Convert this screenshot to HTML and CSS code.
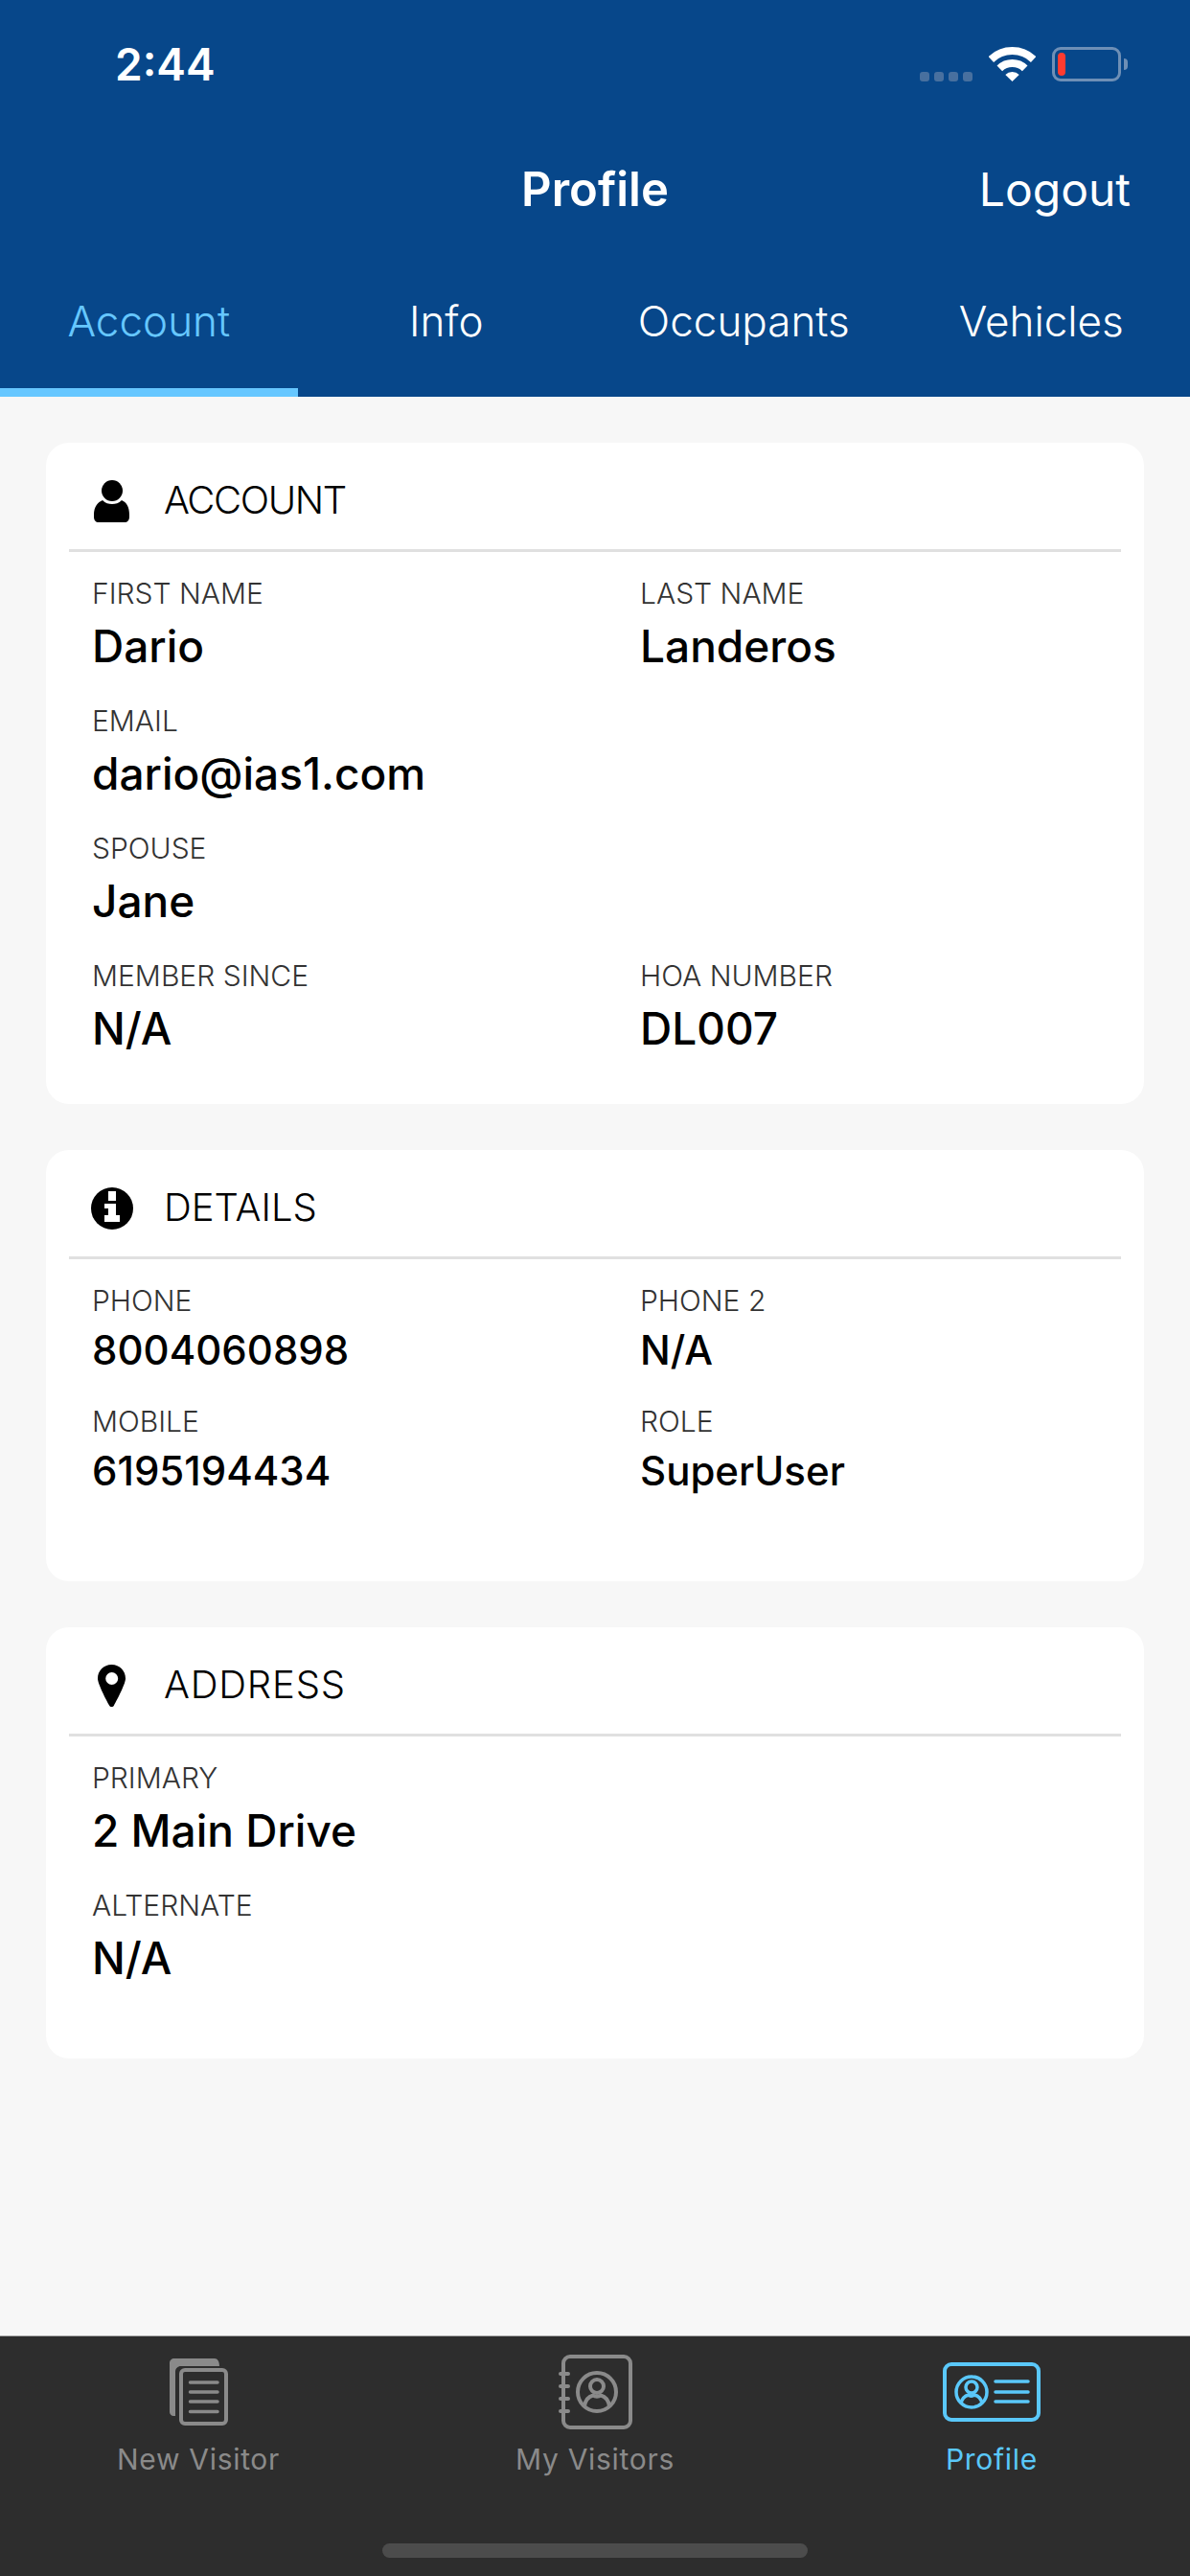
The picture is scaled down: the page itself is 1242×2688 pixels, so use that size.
FILE: index.html
```html
<!DOCTYPE html>
<html lang="en">
<head>
    <meta charset="UTF-8">
    <meta name="viewport" content="width=device-width, initial-scale=1.0">
    <title>Profile</title>
    <link rel="stylesheet" href="styles.css">
</head>
<body>
    <div class="app">
        <!-- Header Section -->
        <div class="header">
            <div class="status-bar">
                <span class="status-time">2:44</span>
                <div class="status-icons">
                    <div class="signal"><i></i><i></i><i></i><i></i></div>
                    <svg class="wifi" width="49" height="36" viewBox="0 0 49 36">
                        <path d="M2.3 13A32 32 0 0 1 46.7 13M11.3 22.3A19 19 0 0 1 37.7 22.3" fill="none" stroke="#fff" stroke-width="8"/>
                        <path d="M24.5 36L17.3 29A10 10 0 0 1 31.7 29Z" fill="#fff"/>
                    </svg>
                    <div class="battery"><div class="battery-level"></div></div>
                    <div class="battery-nub"></div>
                </div>
            </div>
            <div class="nav-bar">
                <h1 class="nav-title">Profile</h1>
                <span class="nav-action">Logout</span>
            </div>
            <div class="tabs">
                <div class="tab active">Account</div>
                <div class="tab">Info</div>
                <div class="tab">Occupants</div>
                <div class="tab">Vehicles</div>
            </div>
        </div>

        <!-- Cards -->
        <div class="content">
            <div class="card card-account">
                <div class="card-header">
                    <svg class="card-icon" width="44" height="44" viewBox="0 0 44 44">
                        <circle cx="22" cy="11" r="11"/>
                        <path d="M3 38V36C3 28 7 23 12 21C15 24 18.5 25 22 25C25.5 25 29 24 32 21C37 23 40 28 40 36V38C40 42 38 44 35 44H8C5 44 3 42 3 38Z"/>
                    </svg>
                    <h2>ACCOUNT</h2>
                </div>
                <div class="fields">
                    <div class="field"><div class="label">FIRST NAME</div><div class="value">Dario</div></div>
                    <div class="field"><div class="label">LAST NAME</div><div class="value">Landeros</div></div>
                    <div class="field field-wide"><div class="label">EMAIL</div><div class="value">dario@ias1.com</div></div>
                    <div class="field field-wide"><div class="label">SPOUSE</div><div class="value">Jane</div></div>
                    <div class="field"><div class="label">MEMBER SINCE</div><div class="value">N/A</div></div>
                    <div class="field"><div class="label">HOA NUMBER</div><div class="value">DL007</div></div>
                </div>
            </div>

            <div class="card card-details">
                <div class="card-header">
                    <svg class="card-icon" width="44" height="44" viewBox="0 0 44 44">
                        <circle cx="22" cy="22" r="22"/>
                        <path d="M18 4H26V14H18ZM14 17H26V29H30V36H14V29H18V22H14Z" fill="#fff"/>
                    </svg>
                    <h2>DETAILS</h2>
                </div>
                <div class="fields fields-tight">
                    <div class="field"><div class="label">PHONE</div><div class="value">8004060898</div></div>
                    <div class="field"><div class="label">PHONE 2</div><div class="value">N/A</div></div>
                    <div class="field"><div class="label">MOBILE</div><div class="value">6195194434</div></div>
                    <div class="field"><div class="label">ROLE</div><div class="value">SuperUser</div></div>
                </div>
            </div>

            <div class="card card-address">
                <div class="card-header">
                    <svg class="card-icon" width="44" height="44" viewBox="0 0 44 44">
                        <path fill-rule="evenodd" d="M21.5 0C13 0 7 6.5 7 14.5C7 20 16 37 19 42.5C20 44.5 23 44.5 24 42.5C27 37 36 20 36 14.5C36 6.5 30 0 21.5 0ZM21.7 8A6.5 6.5 0 1 1 21.7 21A6.5 6.5 0 1 1 21.7 8Z"/>
                    </svg>
                    <h2>ADDRESS</h2>
                </div>
                <div class="fields">
                    <div class="field field-wide"><div class="label">PRIMARY</div><div class="value">2 Main Drive</div></div>
                    <div class="field field-wide"><div class="label">ALTERNATE</div><div class="value">N/A</div></div>
                </div>
            </div>
        </div>

        <!-- Bottom Tab Bar -->
        <div class="tab-bar">
            <div class="tab-items">
                <div class="tab-item">
                    <div class="tab-icon">
                        <svg width="61" height="70" viewBox="0 0 61 70" fill="none" stroke="#8a8a8a">
                            <path d="M5 0H47C50 0 52 3 52 8H12C8.5 8 6 10.5 6 14V60H4C2 60 0 58 0 56V5C0 2 2 0 5 0Z" fill="#8a8a8a" stroke="none"/>
                            <rect x="12" y="12" width="47" height="56" rx="4" stroke-width="4"/>
                            <path d="M21.5 25H50M21.5 35H50M21.5 45H50M21.5 55.5H50" stroke-width="3.5" stroke-linecap="round"/>
                        </svg>
                    </div>
                    <span>New Visitor</span>
                </div>
                <div class="tab-item">
                    <div class="tab-icon">
                        <svg width="77" height="78" viewBox="0 0 77 78" fill="none" stroke="#8a8a8a" stroke-width="4">
                            <rect x="5" y="2" width="70" height="74" rx="7"/>
                            <path d="M2 20H10M2 33H10M2 46H10M2 59H10" stroke-linecap="round"/>
                            <circle cx="40" cy="39" r="20"/>
                            <circle cx="40" cy="33" r="7"/>
                            <path d="M27 54C28 47 32 43.5 36 42.5C38 44 42 44 44 42.5C48 43.5 52 47 53 54"/>
                        </svg>
                    </div>
                    <span>My Visitors</span>
                </div>
                <div class="tab-item active">
                    <div class="tab-icon">
                        <svg width="102" height="62" viewBox="0 0 102 62" fill="none" stroke="#5ac8fa" stroke-width="3.5">
                            <rect x="2" y="2" width="98" height="58" rx="7" stroke-width="4"/>
                            <circle cx="30" cy="31" r="16"/>
                            <circle cx="30" cy="26" r="6"/>
                            <path d="M19 43C20 38 23 35 27 34C29 35.5 31 35.5 33 34C37 35 40 38 41 43"/>
                            <path d="M55 20H89M55 31H89M55 41H89" stroke-linecap="round"/>
                        </svg>
                    </div>
                    <span>Profile</span>
                </div>
            </div>
            <div class="home-indicator"></div>
        </div>
    </div>
</body>
</html>
```

FILE: styles.css
```css
/* Reset some default styles */
* {
    box-sizing: border-box;
    margin: 0;
    padding: 0;
}

body {
    font-family: 'Inter', 'Liberation Sans', sans-serif;
    background-color: #f7f7f7;
    color: #000;
}

.app {
    display: flex;
    flex-direction: column;
    width: 1242px;
    height: 2688px;
}

/* Header */
.header {
    background-color: #07478a;
    color: #fff;
}

.status-bar {
    display: flex;
    align-items: flex-start;
    justify-content: space-between;
    height: 135px;
    padding: 49px 65px 0 120px;
}

.status-time {
    font-size: 46px;
    font-weight: 600;
    line-height: 37px;
}

.status-icons {
    display: flex;
    align-items: center;
    height: 36px;
}

.signal {
    display: flex;
    gap: 5px;
    align-self: flex-end;
    margin-right: 17px;
}

.signal i {
    width: 10px;
    height: 10px;
    border-radius: 3px;
    background-color: #48709f;
}

.wifi {
    margin-right: 17px;
}

.battery {
    width: 72px;
    height: 36px;
    padding: 3px;
    border: 3px solid #6e8fb6;
    border-radius: 9px;
}

.battery-level {
    width: 8px;
    height: 24px;
    border-radius: 4px;
    background-color: #ff3b30;
}

.battery-nub {
    width: 4px;
    height: 12px;
    margin-left: 3px;
    border-radius: 0 6px 6px 0;
    background-color: #6e8fb6;
}

.nav-bar {
    position: relative;
    display: flex;
    align-items: center;
    justify-content: center;
    height: 125px;
}

.nav-title {
    font-size: 49px;
    font-weight: 600;
}

.nav-action {
    position: absolute;
    right: 62px;
    font-size: 48px;
}

.tabs {
    display: grid;
    grid-template-columns: repeat(4, 1fr);
    height: 154px;
}

.tab {
    padding-top: 45px;
    font-size: 44px;
    line-height: 60px;
    text-align: center;
    font-weight: 300;
}

.tab.active {
    color: #66c7ff;
    border-bottom: 9px solid #66c7ff;
}

/* Cards */
.content {
    flex: 1;
    display: flex;
    flex-direction: column;
    gap: 48px;
    padding: 48px;
}

.card {
    background-color: #fff;
    border-radius: 24px;
}

.card-account {
    height: 690px;
}

.card-details,
.card-address {
    height: 450px;
}

.card-header {
    display: flex;
    align-items: center;
    gap: 32px;
    height: 114px;
    margin: 0 24px;
    padding: 11px 0 0 23px;
    border-bottom: 3px solid #e0e0e0;
}

.card-header h2 {
    margin-top: -3px;
    font-size: 40px;
    font-weight: 300;
}

.card-account h2 {
    letter-spacing: -1.4px;
}

.card-address h2 {
    letter-spacing: 0.8px;
}

.fields {
    display: grid;
    grid-template-columns: 572px 1fr;
    row-gap: 32px;
    padding: 25px 0 0 48px;
}

.field-wide {
    grid-column: 1 / -1;
}

.label {
    font-size: 30px;
    font-weight: 300;
    line-height: 36px;
    color: #333;
}

.value {
    margin-top: 9px;
    font-size: 46px;
    font-weight: 500;
    line-height: 56px;
}

.fields-tight {
    row-gap: 28px;
}

.fields-tight .value {
    margin-top: 6px;
    font-size: 42px;
}

/* Bottom Tab Bar */
.tab-bar {
    height: 251px;
    background-color: #2d2d2d;
    border-top: 1px solid #a8a8a8;
}

.tab-items {
    display: grid;
    grid-template-columns: repeat(3, 1fr);
}

.tab-item {
    display: flex;
    flex-direction: column;
    align-items: center;
    font-size: 30px;
    font-weight: 400;
    letter-spacing: 0.7px;
    color: #8a8a8a;
}

.tab-item.active {
    color: #5ac8fa;
}

.tab-icon {
    display: flex;
    align-items: center;
    justify-content: center;
    height: 80px;
    margin-top: 18px;
    margin-bottom: 12px;
}

.home-indicator {
    width: 444px;
    height: 15px;
    margin: 70px auto 0;
    border-radius: 8px;
    background-color: #4c4c4c;
}
```
